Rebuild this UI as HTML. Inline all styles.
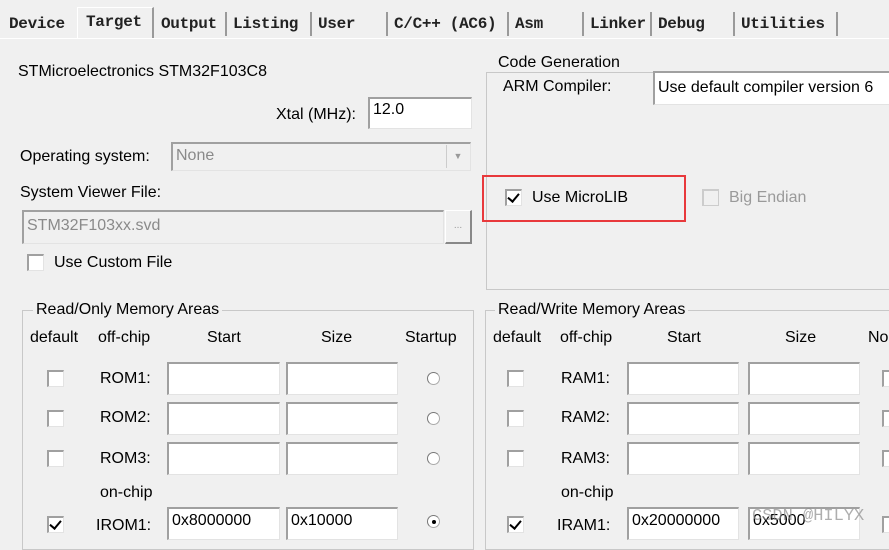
<!DOCTYPE html>
<html><head><meta charset="utf-8"><style>
body{margin:0;width:889px;height:535px;background:#f0f0f0;overflow:hidden;position:relative;font-family:"Liberation Sans",sans-serif;font-size:16px;color:#000}
.a{position:absolute;white-space:nowrap;line-height:18px}
.in{position:absolute;background:#fff;border-top:2px solid #a0a0a0;border-left:2px solid #a0a0a0;border-right:1px solid #e3e3e3;border-bottom:1px solid #e3e3e3;box-sizing:border-box;padding:2px 3px;line-height:20px;white-space:nowrap;overflow:hidden}
.dis{background:#f0f0f0;color:#8a8a8a}
.cb{position:absolute;width:17px;height:17px;background:#fff;border-top:2px solid #a0a0a0;border-left:2px solid #a0a0a0;border-right:1px solid #e3e3e3;border-bottom:1px solid #e3e3e3;box-sizing:border-box}
.cb.chk::after{content:"";position:absolute;left:3px;top:0px;width:5px;height:9px;border:solid #000;border-width:0 2.5px 2.5px 0;transform:rotate(40deg)}
.rd{position:absolute;width:13px;height:13px;border-radius:50%;background:#fff;border:1px solid #aaa;box-sizing:border-box;border-top-color:#777;border-left-color:#777}
.gb{position:absolute;border:1px solid #c8c8c8;box-sizing:border-box}
.gl{position:absolute;background:#f0f0f0;padding:0 3px;white-space:nowrap;line-height:18px}
.tabs{position:absolute;left:0;top:0;width:889px;height:38px;border-bottom:1px solid #fff}
.t{position:absolute;top:12px;height:24px;font-family:"Liberation Mono","DejaVu Sans Mono",monospace;font-size:16px;font-weight:bold;color:#222;line-height:24px;border-right:2px solid #9a9a9a;padding-left:6px;box-sizing:border-box;letter-spacing:-0.3px}
</style></head><body>
<div class="tabs"></div>
<div class="t" style="left:3px;width:75px;border-right:none">Device</div>
<div class="t" style="left:77px;top:7px;height:31px;width:77px;background:#f0f0f0;border-left:1px solid #fff;border-top:1px solid #fff;line-height:28px;padding-left:8px">Target</div>
<div class="t" style="left:155px;width:72px">Output</div>
<div class="t" style="left:227px;width:85px">Listing</div>
<div class="t" style="left:312px;width:76px">User</div>
<div class="t" style="left:388px;width:121px">C/C++ (AC6)</div>
<div class="t" style="left:509px;width:75px">Asm</div>
<div class="t" style="left:584px;width:68px">Linker</div>
<div class="t" style="left:652px;width:83px">Debug</div>
<div class="t" style="left:735px;width:103px">Utilities</div>

<div class="a" style="left:18px;top:63px">STMicroelectronics STM32F103C8</div>
<div class="a" style="left:276px;top:106px">Xtal (MHz):</div>
<div class="in" style="left:368px;top:97px;width:104px;height:32px;padding-top:1px">12.0</div>
<div class="a" style="left:20px;top:148px">Operating system:</div>
<div class="in dis" style="left:171px;top:142px;width:300px;height:29px;padding-top:2px">None</div>
<div style="position:absolute;left:446px;top:145px;width:22px;height:23px;border-left:1px solid #ccc;color:#999;font-size:9px;text-align:center;line-height:23px">▼</div>
<div class="a" style="left:20px;top:184px">System Viewer File:</div>
<div class="in dis" style="left:22px;top:210px;width:422px;height:34px;padding-top:4px">STM32F103xx.svd</div>
<div style="position:absolute;left:445px;top:210px;width:27px;height:34px;border:1px solid #fff;border-right:2px solid #888;border-bottom:2px solid #888;box-sizing:border-box;color:#999;font-size:10px;text-align:center;line-height:30px">...</div>
<div class="cb" style="left:27px;top:254px"></div>
<div class="a" style="left:54px;top:254px">Use Custom File</div>

<div class="gb" style="left:486px;top:72px;width:420px;height:218px"></div>
<div class="gl" style="left:495px;top:54px">Code Generation</div>
<div class="a" style="left:503px;top:78px">ARM Compiler:</div>
<div class="in" style="left:653px;top:71px;width:250px;height:34px;padding-top:5px">Use default compiler version 6</div>
<div style="position:absolute;left:482px;top:175px;width:204px;height:47px;border:2px solid #e8393c;box-sizing:border-box"></div>
<div class="cb chk" style="left:505px;top:189px"></div>
<div class="a" style="left:532px;top:189px">Use MicroLIB</div>
<div class="cb" style="left:702px;top:189px;background:#f0f0f0;border-color:#ccc"></div>
<div class="a" style="left:729px;top:189px;color:#9a9a9a">Big Endian</div>

<div class="gb" style="left:22px;top:310px;width:452px;height:240px"></div>
<div class="gl" style="left:33px;top:301px">Read/Only Memory Areas</div>
<div class="a" style="left:30px;top:329px">default</div>
<div class="a" style="left:98px;top:329px">off-chip</div>
<div class="a" style="left:207px;top:329px">Start</div>
<div class="a" style="left:321px;top:329px">Size</div>
<div class="a" style="left:405px;top:329px">Startup</div>

<div class="cb" style="left:47px;top:370px"></div><div class="a" style="left:100px;top:370px">ROM1:</div>
<div class="in" style="left:167px;top:362px;width:113px;height:33px"></div><div class="in" style="left:286px;top:362px;width:112px;height:33px"></div><div class="rd" style="left:427px;top:372px"></div>
<div class="cb" style="left:47px;top:410px"></div><div class="a" style="left:100px;top:409px">ROM2:</div>
<div class="in" style="left:167px;top:402px;width:113px;height:33px"></div><div class="in" style="left:286px;top:402px;width:112px;height:33px"></div><div class="rd" style="left:427px;top:412px"></div>
<div class="cb" style="left:47px;top:450px"></div><div class="a" style="left:100px;top:450px">ROM3:</div>
<div class="in" style="left:167px;top:442px;width:113px;height:33px"></div><div class="in" style="left:286px;top:442px;width:112px;height:33px"></div><div class="rd" style="left:427px;top:452px"></div>
<div class="a" style="left:100px;top:484px">on-chip</div>
<div class="cb chk" style="left:47px;top:516px"></div><div class="a" style="left:96px;top:517px">IROM1:</div>
<div class="in" style="left:167px;top:507px;width:113px;height:33px;padding-top:2px">0x8000000</div><div class="in" style="left:286px;top:507px;width:112px;height:33px;padding-top:2px">0x10000</div>
<div class="rd" style="left:427px;top:515px"></div><div style="position:absolute;left:432px;top:520px;width:4px;height:4px;border-radius:50%;background:#000"></div>

<div class="gb" style="left:485px;top:310px;width:420px;height:240px"></div>
<div class="gl" style="left:495px;top:301px">Read/Write Memory Areas</div>
<div class="a" style="left:493px;top:329px">default</div>
<div class="a" style="left:560px;top:329px">off-chip</div>
<div class="a" style="left:667px;top:329px">Start</div>
<div class="a" style="left:785px;top:329px">Size</div>
<div class="a" style="left:868px;top:329px">No</div>

<div class="cb" style="left:507px;top:370px"></div><div class="a" style="left:561px;top:370px">RAM1:</div>
<div class="in" style="left:627px;top:362px;width:112px;height:33px"></div><div class="in" style="left:748px;top:362px;width:112px;height:33px"></div><div class="cb" style="left:882px;top:370px"></div>
<div class="cb" style="left:507px;top:410px"></div><div class="a" style="left:561px;top:409px">RAM2:</div>
<div class="in" style="left:627px;top:402px;width:112px;height:33px"></div><div class="in" style="left:748px;top:402px;width:112px;height:33px"></div><div class="cb" style="left:882px;top:410px"></div>
<div class="cb" style="left:507px;top:450px"></div><div class="a" style="left:561px;top:450px">RAM3:</div>
<div class="in" style="left:627px;top:442px;width:112px;height:33px"></div><div class="in" style="left:748px;top:442px;width:112px;height:33px"></div><div class="cb" style="left:882px;top:450px"></div>
<div class="a" style="left:561px;top:484px">on-chip</div>
<div class="cb chk" style="left:507px;top:516px"></div><div class="a" style="left:557px;top:517px">IRAM1:</div>
<div class="in" style="left:627px;top:507px;width:112px;height:33px;padding-top:2px">0x20000000</div><div class="in" style="left:748px;top:507px;width:112px;height:33px;padding-top:2px">0x5000</div><div class="cb" style="left:882px;top:516px"></div>
<div class="a" style="left:752px;top:508px;color:rgba(140,140,140,0.7);font-family:'Liberation Mono',monospace;font-size:17px">CSDN @HILYX</div>
</body></html>
